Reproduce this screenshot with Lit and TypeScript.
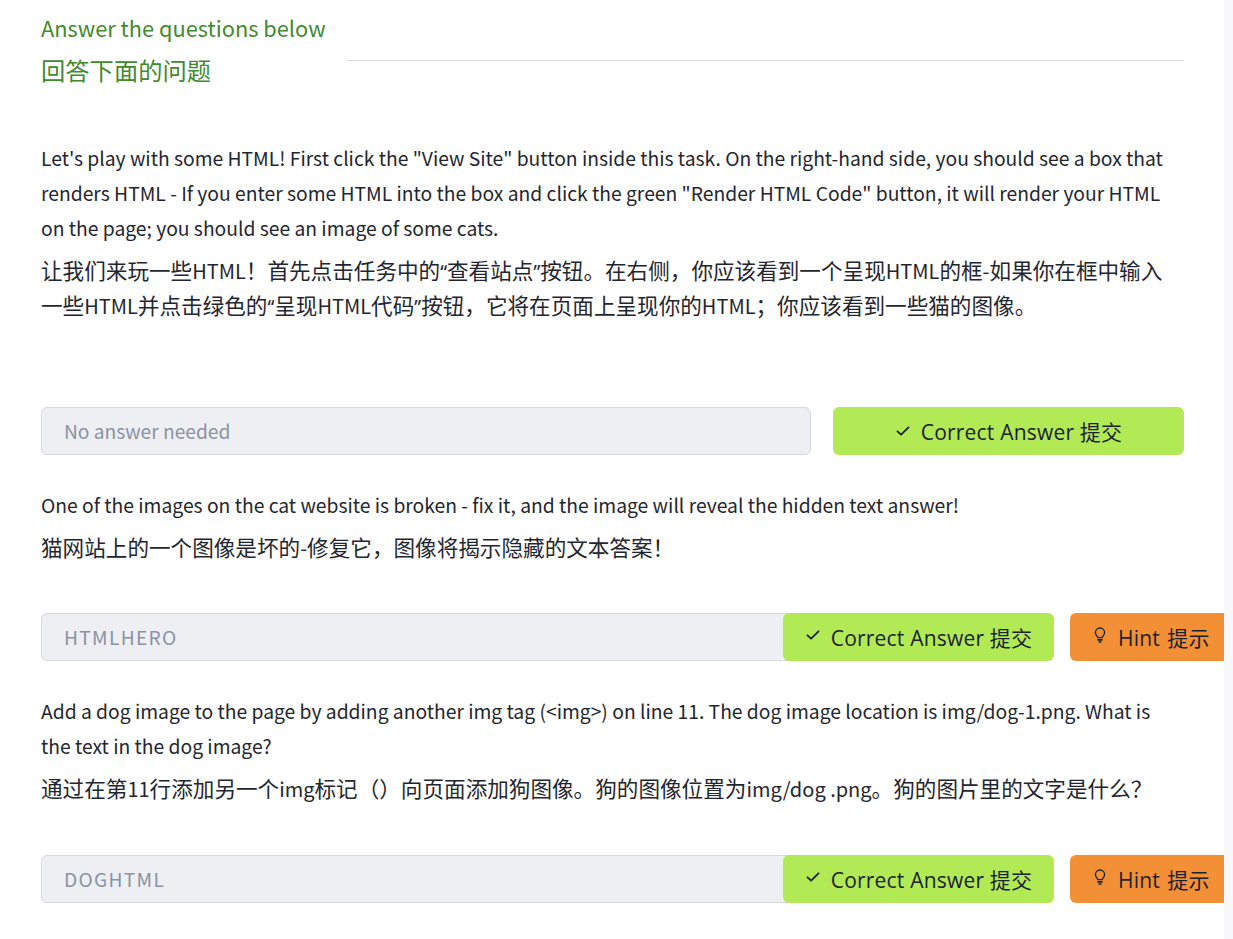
import { LitElement, css, html } from "lit";
import { customElement } from "lit/decorators.js";

const check = html`<svg class="ico" viewBox="0 0 16 16" width="16" height="16" fill="none" stroke="currentColor" stroke-width="1.8" stroke-linecap="round" stroke-linejoin="round"><path d="M2.500 8.300l3.600 3.400 7.400-7.400"/></svg>`;
const bulb = html`<svg class="ico" viewBox="0 0 16 16" width="16" height="16" fill="none" stroke="currentColor" stroke-width="1.300" stroke-linecap="round" stroke-linejoin="round"><path d="M5.900 10.600C5.600 9.300 3.400 8.300 3.400 5.600a4.600 4.600 0 0 1 9.200 0c0 2.700-2.200 3.700-2.500 5z"/><path d="M6 12.900h4" stroke-width="1.600"/><path d="M7 15h2"/></svg>`;

// latin runs and curly quotes inside the chinese lines are set smaller / narrower
function cn(text: string) {
  return text.split(/([A-Za-z0-9\-\/. ]+|[“”])/).map((part, i) => {
    if (i % 2 === 0) return part;
    return html`<span class=${part === "“" || part === "”" ? "quote" : "lat"}>${part}</span>`;
  });
}

@customElement("app-root")
class AppRoot extends LitElement {
  static styles = css`
    :host {
      display: flex;
      height: 939px;
      overflow: hidden;
      background: #fff;
      color: #1f2630;
      font-family: "Noto Sans CJK SC", "Noto Sans", sans-serif;
    }

    .main {
      width: 1224px;
      flex: none;
      overflow: hidden;
      padding: 9px 0 0 41px;
      box-sizing: border-box;
    }

    .scrollbar {
      flex-grow: 1;
      background: #f8f8fb;
    }

    .heading {
      display: flex;
      width: 1143px;
      gap: 21px;
    }

    .heading h3 {
      margin: 0;
      font-size: 21.8px;
      font-weight: 400;
      line-height: 38px;
      color: #418a2e;
      white-space: nowrap;
    }

    .heading .cn {
      font-size: 24.3px;
      line-height: 46px;
    }

    .heading hr {
      flex-grow: 1;
      margin: 51px 0 0;
      border: none;
      border-top: 1px solid #d8d8e0;
      height: 0;
    }

    .text {
      font-size: 19.3px;
      line-height: 35px;
      margin: 0;
      width: 1143px;
    }

    .cn-text {
      font-size: 21.6px;
      line-height: 35px;
      margin: 6px 0 0;
      width: 1130px;
    }

    .lat {
      font-size: 20px;
      line-height: 1;
    }

    .quote {
      font-family: "Noto Sans", sans-serif;
      font-size: 19px;
      line-height: 1;
    }

    .row {
      display: flex;
      align-items: stretch;
      height: 48px;
    }

    .input {
      display: flex;
      align-items: center;
      flex: none;
      box-sizing: border-box;
      background: #eeeff3;
      border: 1px solid #d5d8e0;
      border-radius: 6px;
      padding-left: 22px;
      font-size: 19.2px;
      color: #8a93a6;
    }

    .answer {
      letter-spacing: 1.3px;
    }

    .btn {
      display: flex;
      align-items: center;
      justify-content: center;
      gap: 10px;
      flex: none;
      box-sizing: border-box;
      border-radius: 6px;
      font-family: "Open Sans", "Noto Sans CJK SC", sans-serif;
      font-size: 21px;
      letter-spacing: 0.2px;
      color: #1c2230;
      white-space: nowrap;
    }

    .green {
      background: #b2ea56;
    }

    .orange {
      background: #f39035;
      word-spacing: -2px;
    }

    .ico {
      flex: none;
    }

    .first .input {
      width: 770px;
    }

    .first .btn {
      width: 351px;
      margin-left: 22px;
    }

    .group .input {
      width: 750px;
      border-radius: 6px 0 0 6px;
    }

    .group .green {
      width: 271px;
      margin-left: -8px;
    }

    .group .orange {
      width: 164px;
      margin-left: 16px;
      padding-left: 22px;
      justify-content: flex-start;
    }

    .group .ico {
      margin-top: -4px;
    }

    .intro {
      margin-top: 48px;
    }

    .r1 {
      margin-top: 85px;
    }

    .q2 {
      margin-top: 33px;
    }

    .r2 {
      margin-top: 49px;
    }

    .q3 {
      margin-top: 33px;
    }

    .r3 {
      margin-top: 50px;
    }
  `;

  render() {
    return html`
      <div class="main">
        <div class="heading">
          <div>
            <h3>Answer the questions below</h3>
            <h3 class="cn">回答下面的问题</h3>
          </div>
          <hr />
        </div>

        <div class="intro">
          <p class="text">Let's play with some HTML! First click the "View Site" button inside this task. On the right-hand side, you should see a box that renders HTML - If you enter some HTML into the box and click the green "Render HTML Code" button, it will render your HTML on the page; you should see an image of some cats.</p>
          <p class="cn-text">${cn("让我们来玩一些HTML！首先点击任务中的“查看站点”按钮。在右侧，你应该看到一个呈现HTML的框-如果你在框中输入一些HTML并点击绿色的“呈现HTML代码”按钮，它将在页面上呈现你的HTML；你应该看到一些猫的图像。")}</p>
        </div>

        <div class="row first r1">
          <div class="input">No answer needed</div>
          <div class="btn green">${check}<span>Correct Answer 提交</span></div>
        </div>

        <div class="q2">
          <p class="text">One of the images on the cat website is broken - fix it, and the image will reveal the hidden text answer!</p>
          <p class="cn-text">${cn("猫网站上的一个图像是坏的-修复它，图像将揭示隐藏的文本答案！")}</p>
        </div>

        <div class="row group r2">
          <div class="input answer">HTMLHERO</div>
          <div class="btn green">${check}<span>Correct Answer 提交</span></div>
          <div class="btn orange">${bulb}<span>Hint&nbsp; 提示</span></div>
        </div>

        <div class="q3">
          <p class="text">Add a dog image to the page by adding another img tag (&lt;img&gt;) on line 11. The dog image location is img/dog-1.png. What is the text in the dog image?</p>
          <p class="cn-text">${cn("通过在第11行添加另一个img标记（）向页面添加狗图像。狗的图像位置为img/dog .png。狗的图片里的文字是什么？")}</p>
        </div>

        <div class="row group r3">
          <div class="input answer">DOGHTML</div>
          <div class="btn green">${check}<span>Correct Answer 提交</span></div>
          <div class="btn orange">${bulb}<span>Hint&nbsp; 提示</span></div>
        </div>
      </div>
      <div class="scrollbar"></div>
    `;
  }
}

export default AppRoot;
